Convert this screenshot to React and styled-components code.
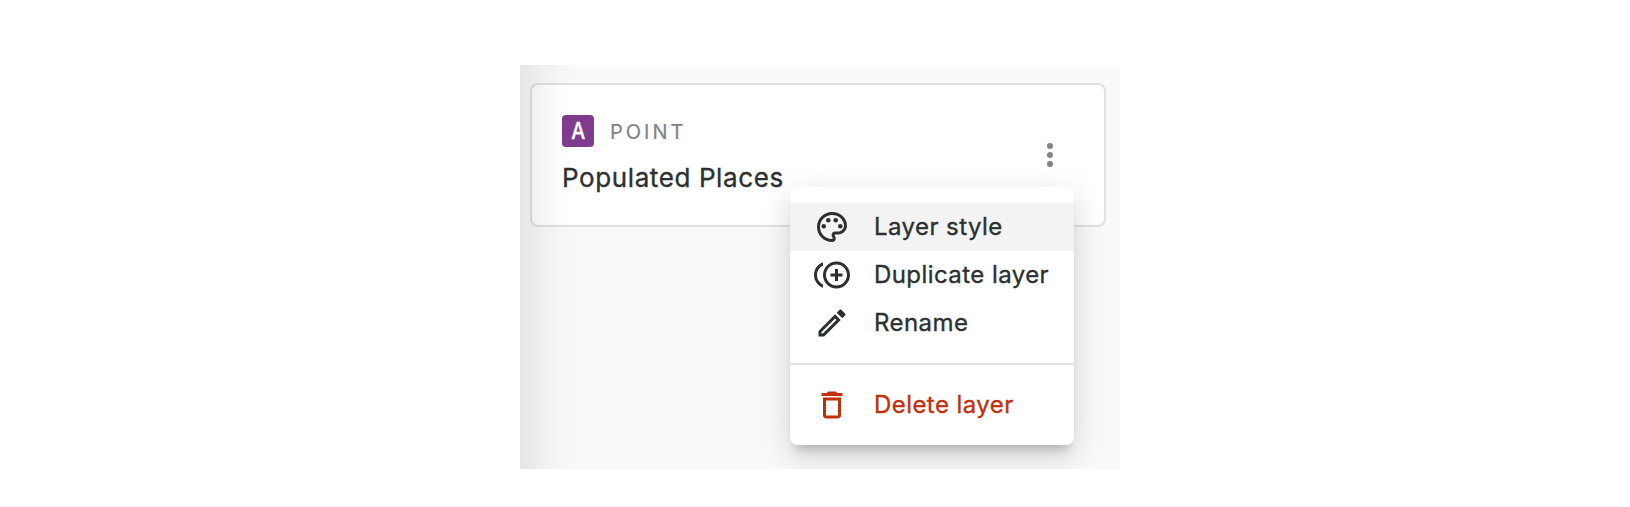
import React from 'react';
import styled, { createGlobalStyle } from 'styled-components';

const GlobalStyle = createGlobalStyle`
  *, *::before, *::after { box-sizing: border-box; }
  body {
    margin: 0;
    background: #fff;
    color: #2c3032;
    font-family: Inter, "Liberation Sans", sans-serif;
    -webkit-font-smoothing: antialiased;
  }
`;

const Page = styled.main`
  height: 507px;
  padding: 65px 0 0 520px;
  overflow: hidden;
`;

const Panel = styled.section`
  position: relative;
  width: 600px;
  height: 404px;
  padding: 18px 14px 0 10px;
  background: #f8faf9;
  overflow: hidden;
`;

const EdgeShade = styled.div`
  position: absolute;
  inset: 0 auto 0 0;
  width: 60px;
  pointer-events: none;
  background: linear-gradient(
    to right,
    rgba(0, 0, 0, 0.08) 0,
    rgba(0, 0, 0, 0.058) 12px,
    rgba(0, 0, 0, 0.034) 24px,
    rgba(0, 0, 0, 0.015) 38px,
    rgba(0, 0, 0, 0.005) 50px,
    rgba(0, 0, 0, 0) 60px
  );
`;

const Card = styled.article`
  display: flex;
  align-items: center;
  justify-content: space-between;
  height: 144px;
  padding: 0 36px 0 30px;
  background: #fff;
  border: 2px solid #e0e0e0;
  border-radius: 8px;
`;

const Details = styled.div`
  display: flex;
  flex-direction: column;
  gap: 12px;
`;

const Source = styled.div`
  display: flex;
  align-items: center;
  gap: 16px;
`;

const Badge = styled.span`
  display: flex;
  align-items: center;
  justify-content: center;
  width: 32px;
  height: 32px;
  border-radius: 4px;
  background: #7f3c8d;
  color: #fff;
`;

const BadgeLetter = styled.span`
  font-size: 23px;
  line-height: 32px;
  font-weight: 500;
  transform: scaleX(0.86);
  -webkit-text-stroke: 0.3px currentColor;
`;

const Kind = styled.span`
  padding-top: 2px;
  font-size: 20px;
  line-height: 30px;
  letter-spacing: 3px;
  color: #818384;
  -webkit-text-stroke: 0.2px currentColor;
`;

const Title = styled.h2`
  margin: 0;
  padding-top: 2px;
  font-size: 26px;
  line-height: 34px;
  font-weight: 400;
  letter-spacing: 0.6px;
  white-space: nowrap;
  -webkit-text-stroke: 0.35px currentColor;
`;

const MenuButton = styled.button`
  display: flex;
  padding: 0;
  border: 0;
  background: none;
  color: #818384;
`;

const Menu = styled.div`
  position: absolute;
  top: 122px;
  left: 270px;
  width: 284px;
  padding: 16px 0;
  border-radius: 8px;
  background: #fff;
  box-shadow:
    0 10px 10px -6px rgba(0, 0, 0, 0.2),
    0 16px 20px 2px rgba(0, 0, 0, 0.05),
    0 6px 32px 4px rgba(0, 0, 0, 0.09);
`;

const MenuItem = styled.div`
  display: flex;
  align-items: center;
  gap: 24px;
  height: 48px;
  padding: 0 24px;
  background: ${({ $active }) => ($active ? '#f3f3f3' : 'transparent')};
  color: ${({ $danger }) => ($danger ? '#c1300b' : 'inherit')};
  font-size: 24px;
  line-height: 40px;
  letter-spacing: 0.43px;
  white-space: nowrap;
  -webkit-text-stroke: 0.35px currentColor;
`;

const Divider = styled.hr`
  height: 2px;
  margin: 16px 0;
  border: 0;
  background: #e4e4e4;
`;

const Svg = styled.svg`
  display: block;
  flex: none;
  width: 36px;
  height: 36px;
  fill: currentColor;
`;

const MoreIcon = () => (
  <Svg viewBox="0 0 24 24">
    <circle cx="12" cy="6" r="2" />
    <circle cx="12" cy="12" r="2" />
    <circle cx="12" cy="18" r="2" />
  </Svg>
);

const PaletteIcon = () => (
  <Svg viewBox="0 0 24 24">
    <path d="M12 22C6.49 22 2 17.51 2 12S6.49 2 12 2s10 4.04 10 9c0 3.31-2.69 6-6 6h-1.77c-.28 0-.5.22-.5.5 0 .12.05.23.13.33.41.47.64 1.06.64 1.67A2.5 2.5 0 0 1 12 22m0-18c-4.41 0-8 3.59-8 8s3.59 8 8 8c.28 0 .5-.22.5-.5a.54.54 0 0 0-.14-.35c-.41-.46-.63-1.05-.63-1.65a2.5 2.5 0 0 1 2.5-2.5H16c2.21 0 4-1.79 4-4 0-3.86-3.59-7-8-7" />
    <circle cx="6.5" cy="11.5" r="1.5" />
    <circle cx="9.5" cy="7.5" r="1.5" />
    <circle cx="14.5" cy="7.5" r="1.5" />
    <circle cx="17.5" cy="11.5" r="1.5" />
  </Svg>
);

const DuplicateIcon = () => (
  <Svg viewBox="0 0 24 24">
    <path d="M16 8h-2v3h-3v2h3v3h2v-3h3v-2h-3zM2 12c0-2.79 1.64-5.2 4.01-6.32V3.52C2.52 4.76 0 8.09 0 12s2.52 7.24 6.01 8.48v-2.16C3.64 17.2 2 14.79 2 12m13-9c-4.96 0-9 4.04-9 9s4.04 9 9 9 9-4.04 9-9-4.04-9-9-9m0 16c-3.86 0-7-3.14-7-7s3.14-7 7-7 7 3.14 7 7-3.14 7-7 7" />
  </Svg>
);

const EditIcon = () => (
  <Svg viewBox="0 0 24 24">
    <path d="m14.06 9.02.92.92L5.92 19H5v-.92zM17.66 3c-.25 0-.51.1-.7.29l-1.83 1.83 3.75 3.75 1.83-1.83c.39-.39.39-1.02 0-1.41l-2.34-2.34c-.2-.2-.45-.29-.71-.29m-3.6 3.19L3 17.25V21h3.75L17.81 9.94z" />
  </Svg>
);

const DeleteIcon = () => (
  <Svg viewBox="0 0 24 24">
    <path d="M6 19c0 1.100.9 2 2 2h8c1.100 0 2-.9 2-2V7H6zM8 9h8v10H8zm7.500-5-1-1h-5l-1 1H5v2h14V4z" />
  </Svg>
);

export default function App() {
  return (
    <Page>
      <GlobalStyle />
      <Panel>
        <Card>
          <Details>
            <Source>
              <Badge><BadgeLetter>A</BadgeLetter></Badge>
              <Kind>POINT</Kind>
            </Source>
            <Title>Populated Places</Title>
          </Details>
          <MenuButton aria-label="Layer options"><MoreIcon /></MenuButton>
        </Card>
        <EdgeShade />
        <Menu role="menu">
          <MenuItem role="menuitem" $active><PaletteIcon />Layer style</MenuItem>
          <MenuItem role="menuitem"><DuplicateIcon />Duplicate layer</MenuItem>
          <MenuItem role="menuitem"><EditIcon />Rename</MenuItem>
          <Divider />
          <MenuItem role="menuitem" $danger><DeleteIcon />Delete layer</MenuItem>
        </Menu>
      </Panel>
    </Page>
  );
}
